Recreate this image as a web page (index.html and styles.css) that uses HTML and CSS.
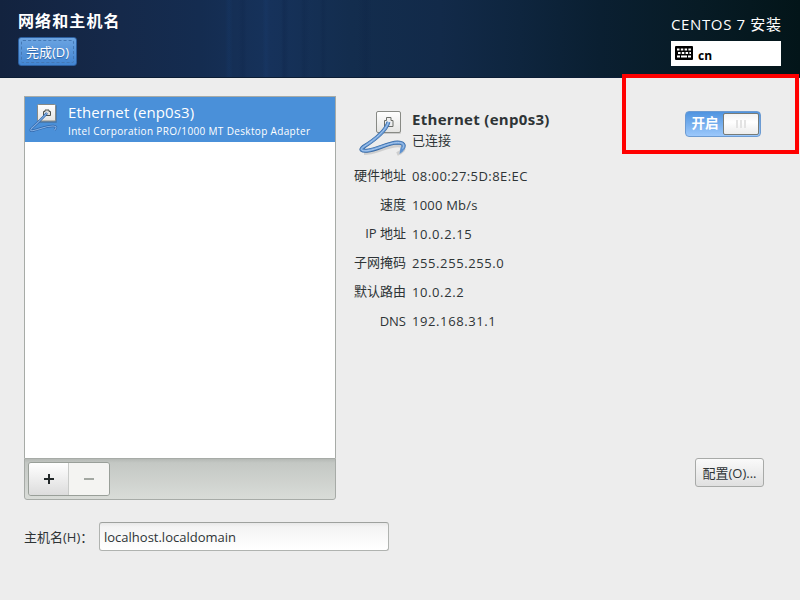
FILE: index.html
```html
<!DOCTYPE html>
<html lang="zh-CN">
<head>
<meta charset="utf-8">
<title>网络和主机名</title>
<link rel="stylesheet" href="styles.css">
</head>
<body>
<svg class="defs" width="0" height="0" aria-hidden="true">
  <defs>
    <linearGradient id="plate" x1="0" y1="0" x2="0" y2="1">
      <stop offset="0" stop-color="#ffffff"/><stop offset="1" stop-color="#e4e4e2"/>
    </linearGradient>
  </defs>
</svg>
<header class="banner">
  <div class="banner-left">
    <h1 class="title">网络和主机名</h1>
    <button class="done"><span>完成(D)</span></button>
  </div>
  <div class="banner-right">
    <div class="product">CENTOS 7 安装</div>
    <div class="keyboard">
      <svg width="18" height="14" viewBox="0 0 18 14">
        <rect width="18" height="14" rx="1" fill="#000"/>
        <path d="M2 3.500h14" stroke="#fff" stroke-width="2" stroke-dasharray="2.500 1.300"/>
        <path d="M3 7h13" stroke="#fff" stroke-width="2" stroke-dasharray="2.500 1.300"/>
        <path d="M2 10.500h3m1 0h6m1 0h3" stroke="#fff" stroke-width="2"/>
      </svg>
      <span class="layout">cn</span>
    </div>
  </div>
</header>
<main class="content">
  <div class="panels">
    <section class="devices">
      <div class="device-list">
        <div class="device">
          <svg class="device-icon" width="31" height="31" viewBox="0 0 31 31">
            <rect x="9" y="2" width="19" height="18" rx="1" fill="#456" opacity=".35"/>
            <rect x="8.500" y="1.500" width="18" height="16.500" rx="1" fill="url(#plate)" stroke="#888a85"/>
            <path d="M14.500 12.500v-4h1.500v-1.500h4v1.500h1.500v4z" fill="#ddd" stroke="#4e524d"/>
            <path d="M18 10C14 15 8 20 2.500 25.500c-2 2.500 0 2.500 2 2 7-1.500 13-5 20-4.500 3 .3 3.500 1.500 1 4" fill="none" stroke="#2f66ab" stroke-width="2.400"/>
            <path d="M18 10C14 15 8 20 2.500 25.500c-2 2.500 0 2.500 2 2 7-1.500 13-5 20-4.500 3 .3 3.500 1.500 1 4" fill="none" stroke="#86b1e4" stroke-width="1.100"/>
          </svg>
          <div class="device-text">
            <div class="device-name">Ethernet (enp0s3)</div>
            <div class="device-desc">Intel Corporation PRO/1000 MT Desktop Adapter</div>
          </div>
        </div>
      </div>
      <div class="toolbar">
        <div class="button-group">
          <button class="add"><svg width="10" height="10"><path d="M5 0v10M0 5h10" stroke="#222829" stroke-width="2"/></svg></button>
          <button class="remove"><svg width="10" height="10"><path d="M0 5h10" stroke="#a3a8a2" stroke-width="2"/></svg></button>
        </div>
      </div>
    </section>
    <section class="details">
      <div class="details-head">
        <svg class="details-icon" width="50" height="48" viewBox="0 0 50 48">
          <rect x="18" y="3" width="24" height="21" rx="1.500" fill="#999" opacity=".4"/>
          <rect x="17.500" y="1.500" width="24" height="21" rx="1.500" fill="url(#plate)" stroke="#888a85"/>
          <path d="M25.500 16.500v-6h2v-3h4.500v3h2v6z" fill="#eee" stroke="#6b6e69"/>
          <path d="M5 43C15 43 25 37 36 35.500c6-.8 10 1 8 4.500-1.500 2-3.500 3-6 4" fill="none" stroke="#777" stroke-opacity=".25" stroke-width="4"/>
          <path d="M29.500 12C27 20 17 29 5 36.500c-5 3.500-2 4.500 3 4.200 11-1.200 20-7.700 30.500-8.200 6 0 7.500 3 5 6" fill="none" stroke="#3567a3" stroke-width="4"/>
          <path d="M46 37.500c-1 3.500-3 5-5.500 6.500l1-6.500z" fill="#5f92cf"/>
          <path d="M29.500 12C27 20 17 29 5 36.500c-5 3.500-2 4.500 3 4.200 11-1.200 20-7.700 30.500-8.200 6 0 7.500 3 5 6" fill="none" stroke="#6c9dd6" stroke-width="2.600"/>
          <path d="M29.500 12C27 20 17 29 5 36.500c-5 3.500-2 4.500 3 4.200 11-1.200 20-7.700 30.500-8.200 6 0 7.500 3 5 6" fill="none" stroke="#a9c8ee"/>
        </svg>
        <div class="heading">
          <h2 class="name">Ethernet (enp0s3)</h2>
          <div class="status">已连接</div>
        </div>
        <div class="switch"><span class="switch-label">开启</span><span class="knob"><i></i><i></i><i></i></span></div>
      </div>
      <dl class="info">
        <dt>硬件地址</dt><dd class="mac">08:00:27:5D:8E:EC</dd>
        <dt>速度</dt><dd class="speed">1000 Mb/s</dd>
        <dt>IP 地址</dt><dd>10.0.2.15</dd>
        <dt>子网掩码</dt><dd>255.255.255.0</dd>
        <dt>默认路由</dt><dd>10.0.2.2</dd>
        <dt>DNS</dt><dd>192.168.31.1</dd>
      </dl>
      <button class="configure">配置(O)...</button>
    </section>
  </div>
  <div class="hostname">
    <label for="host">主机名(H)：</label>
    <input id="host" type="text" value="localhost.localdomain">
  </div>
</main>
<div class="highlight"></div>
</body>
</html>
```
FILE: styles.css
```css
* { box-sizing: border-box; }
body {
  position: relative;
  margin: 0;
  width: 800px;
  height: 600px;
  overflow: hidden;
  background: #ededed;
  color: #2e3436;
  font: 13px/18px "Open Sans", "Noto Sans CJK SC", sans-serif;
}
button, input { font: inherit; color: inherit; margin: 0; padding: 0; }
h1, h2, dl, dd { margin: 0; }
svg { display: block; flex: none; }
.defs { position: absolute; }

.banner {
  display: flex;
  justify-content: space-between;
  height: 78px;
  padding: 0 19px 0 18px;
  color: #fff;
  border-bottom: 1px solid #0b1d35;
  background:
    linear-gradient(90deg, transparent 225px, rgba(24, 66, 122, .2) 229px, transparent 233px 238px, rgba(8, 26, 60, .15) 243px, transparent 247px 262px, rgba(28, 66, 122, .2) 266px, transparent 270px 281px, rgba(8, 26, 60, .2) 284px, transparent 289px 300px, rgba(8, 26, 60, .15) 304px, transparent 309px 320px, rgba(8, 26, 60, .15) 323px, transparent 327px 358px, rgba(8, 26, 60, .15) 366px, transparent 372px),
    linear-gradient(90deg, #13233f 0, #15294a 120px, #142c50 200px, #16325b 270px, #132d4e 350px, #122a49 440px, #0e253e 520px, #0a1f31 600px, #071b25 700px, #031519 800px);
}
.title {
  margin-top: 9px;
  font-size: 16px;
  line-height: 24px;
  letter-spacing: 1.1px;
}
.done {
  display: block;
  width: 59px;
  height: 29px;
  margin-top: 4px;
  padding: 2px;
  border: 1px solid #2c5f9f;
  border-radius: 3px;
  background: linear-gradient(#6ca5e2, #4285d2);
  color: #fff;
}
.done span {
  display: block;
  height: 23px;
  border: 1px dashed #4478b5;
  border-radius: 2px;
  line-height: 22px;
  text-shadow: 0 1px 1px #2f62a2;
}
.product {
  margin-top: 13px;
  font-size: 15px;
  line-height: 23px;
  letter-spacing: .63px;
  white-space: nowrap;
}
.banner-right { width: 110px; }
.keyboard {
  display: flex;
  width: 110px;
  height: 25px;
  margin-top: 5px;
  padding: 5px 4px 0;
  gap: 5px;
  background: #fff;
  color: #000;
}
.layout { font-weight: 700; font-size: 12px; line-height: 19px; }

.content { padding: 18px 24px 0; }
.panels { display: flex; height: 404px; }
.devices { display: flex; flex-direction: column; width: 312px; }
.device-list {
  flex: 1;
  border: 1px solid #a7aba7;
  border-bottom: 0;
  background: #fff;
}
.device {
  display: flex;
  height: 45px;
  padding: 6px 0 0 4px;
  background: #4a90d9;
  color: #fff;
}
.device-text { padding-left: 8px; white-space: nowrap; }
.device-name { margin-top: -1px; font-size: 15px; line-height: 20px; letter-spacing: .12px; }
.device-desc { font-size: 10px; line-height: 18px; letter-spacing: .34px; }
.toolbar {
  height: 42px;
  padding: 3px;
  border: 1px solid #a7aba7;
  border-radius: 0 0 3px 3px;
  background: linear-gradient(#b5b9b5, #c4c8c4 4px, #d9dcd8);
}
.button-group {
  display: flex;
  width: 82px;
  height: 34px;
  border: 1px solid #999f99;
  border-radius: 3px;
  overflow: hidden;
}
.button-group button {
  display: flex;
  align-items: center;
  width: 40px;
  padding-left: 15px;
  border: 0;
  background: #f4f4f2;
}
.button-group .add {
  border-right: 1px solid #c9cbc9;
  background: linear-gradient(#fff, #dcdcdc);
}
.details { flex: 1; display: flex; flex-direction: column; padding: 14px 12px 13px 18px; }
.details-head { display: flex; height: 51px; }
.details-icon { margin-left: 5px; }
.heading { margin-left: 3px; white-space: nowrap; }
.name { margin-top: -1px; font-size: 15px; line-height: 20px; letter-spacing: .3px; }
.status { line-height: 22px; }
.switch {
  display: flex;
  width: 76px;
  height: 26px;
  margin: 1px 3px 0 auto;
  padding: 1px;
  border: 1px solid #6c9bd2;
  border-radius: 4px;
  background: linear-gradient(#4f94e0, #9cc8fb);
}
.switch-label {
  width: 36px;
  color: #fff;
  font-size: 13.500px;
  font-weight: 700;
  line-height: 21px;
  text-align: center;
}
.knob {
  display: flex;
  justify-content: center;
  align-items: center;
  gap: 2px;
  width: 36px;
  height: 22px;
  border: 1px solid #777b77;
  border-radius: 2px;
  background: linear-gradient(#f3f3f3, #fff 40%, #ececec);
}
.knob i { width: 2px; height: 8px; background: #e3e3e3; }
.info {
  display: grid;
  grid-template-columns: 52px 1fr;
  grid-auto-rows: 29px;
  column-gap: 6px;
  line-height: 29px;
  white-space: nowrap;
}
.info dt { text-align: right; }
.info dt:last-of-type { padding-top: 1px; }
.info dd { padding-top: 1px; letter-spacing: .6px; }
.info .mac { letter-spacing: .42px; }
.info .speed { letter-spacing: .22px; }
.configure {
  width: 69px;
  height: 29px;
  margin: auto 0 0 auto;
  border: 1px solid #a8aaa8;
  border-radius: 3px;
  background: linear-gradient(#fafafa, #e0e0e0);
  white-space: nowrap;
}
.hostname { display: flex; align-items: center; height: 29px; margin-top: 22px; }
.hostname label { width: 75px; white-space: nowrap; }
.hostname input {
  width: 290px;
  height: 29px;
  padding: 1px 4px 0;
  border: 1px solid #b0b3b0;
  border-top-color: #9ea19e;
  border-radius: 3px;
  background: linear-gradient(#e8e8e8, #f4f4f4 4px, #fff);
}
.highlight {
  position: absolute;
  left: 622px;
  top: 74px;
  width: 177px;
  height: 80px;
  border: 4px solid #f00;
}
```
